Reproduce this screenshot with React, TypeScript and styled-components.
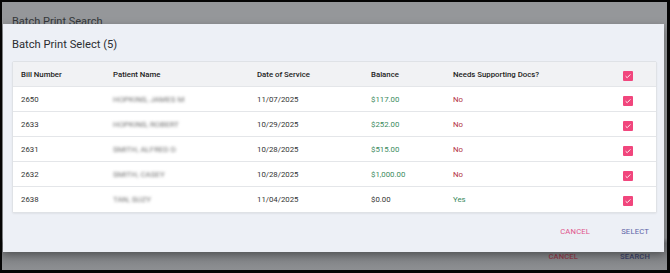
import React from "react";
import styled, { createGlobalStyle } from "styled-components";

const Global = createGlobalStyle`
  html, body { margin: 0; padding: 0; background: #000; }
  body { font-family: Roboto, "Liberation Sans", sans-serif; }
  * { box-sizing: border-box; }
`;

const Frame = styled.div`
  width: 670px;
  height: 273px;
  background: #050505;
  padding: 2px 3px 3px 2px;
`;

const Screen = styled.div`
  position: relative;
  width: 100%;
  height: 100%;
  background: linear-gradient(#95979a 0%, #95979a 88%, #76787b 90%, #8d8f92 100%);
  overflow: hidden;
  display: flex;
  flex-direction: column;
  justify-content: space-between;
`;

const BehindTitle = styled.div`
  padding: 13px 0 0 10px;
  font-size: 11px;
  color: #34373b;
  line-height: 14px;
`;

const BehindActions = styled.div`
  display: flex;
  justify-content: flex-end;
  gap: 42px;
  padding: 0 17px 9px 0;
`;

const BehindButton = styled.span<{ $tone: "cancel" | "ok" }>`
  font-size: 7.6px;
  font-weight: 500;
  letter-spacing: 0.02em;
  color: ${(p) => (p.$tone === "cancel" ? "#8e3b4a" : "#3a3f66")};
`;

const Dialog = styled.div`
  position: absolute;
  left: 1px;
  right: 3px;
  top: 22px;
  height: 228px;
  background: #edf0f6;
  box-shadow: 0 3px 8px rgba(0, 0, 0, 0.35);
  display: flex;
  flex-direction: column;
  padding: 13px 7px 0 9px;
`;

const Title = styled.h2`
  margin: 0 0 8px 0;
  font-size: 11.2px;
  font-weight: 400;
  line-height: 16px;
  color: #2b2d31;
`;

const Card = styled.div`
  background: #fff;
  border: 1px solid #dfe2e6;
  border-radius: 2px;
  box-shadow: 0 1px 2px rgba(0, 0, 0, 0.06);
`;

const Row = styled.div<{ $head?: boolean }>`
  display: grid;
  grid-template-columns: 92px 144px 114px 82px 171px 1fr;
  height: 25px;
  align-items: center;
  background: ${(p) => (p.$head ? "#f1f2f4" : "#fff")};
  border-bottom: 1px solid #e4e6e9;
  &:last-child { border-bottom: none; }
`;

const Cell = styled.div<{ $head?: boolean; $color?: string }>`
  padding-left: 8px;
  font-size: 7.8px;
  font-weight: ${(p) => (p.$head ? 500 : 400)};
  color: ${(p) => p.$color || (p.$head ? "#222" : "#333")};
  white-space: nowrap;
`;

const Blurred = styled.span`
  filter: blur(1.4px);
  color: #6e6e6e;
  font-size: 7.9px;
`;

const Check = styled.span`
  display: inline-flex;
  align-items: center;
  justify-content: center;
  width: 10px;
  height: 10px;
  margin-left: 7px;
  background: #f1467d;
  border-radius: 1px;
`;

const Actions = styled.div`
  display: flex;
  justify-content: flex-end;
  gap: 31px;
  padding: 14px 8px 0 0;
`;

const TextButton = styled.span<{ $tone: "cancel" | "ok" }>`
  font-size: 7.7px;
  font-weight: 400;
  letter-spacing: 0.02em;
  color: ${(p) => (p.$tone === "cancel" ? "#e0528b" : "#5b62a6")};
`;

const CheckBox = () => (
  <Check>
    <svg width="8" height="8" viewBox="0 0 8 8">
      <path d="M1.6 4.2 L3.2 5.7 L6.4 2.4" stroke="#fff" strokeWidth="0.9" fill="none" />
    </svg>
  </Check>
);

const rows = [
  { bill: "2650", name: "HOPKINS, JAMES M", date: "11/07/2025", bal: "$117.00", balColor: "#3a8a5c", docs: "No" },
  { bill: "2633", name: "HOPKINS, ROBERT", date: "10/29/2025", bal: "$252.00", balColor: "#3a8a5c", docs: "No" },
  { bill: "2631", name: "SMITH, ALFRED D", date: "10/28/2025", bal: "$515.00", balColor: "#3a8a5c", docs: "No" },
  { bill: "2632", name: "SMITH, CASEY", date: "10/28/2025", bal: "$1,000.00", balColor: "#3a8a5c", docs: "No" },
  { bill: "2638", name: "TAN, SUZY", date: "11/04/2025", bal: "$0.00", balColor: "#333", docs: "Yes" },
];

export default function App() {
  return (
    <Frame>
      <Global />
      <Screen>
        <BehindTitle>Batch Print Search</BehindTitle>
        <BehindActions>
          <BehindButton $tone="cancel">CANCEL</BehindButton>
          <BehindButton $tone="ok">SEARCH</BehindButton>
        </BehindActions>
        <Dialog>
          <Title>Batch Print Select (5)</Title>
          <Card>
            <Row $head>
              <Cell $head>Bill Number</Cell>
              <Cell $head>Patient Name</Cell>
              <Cell $head>Date of Service</Cell>
              <Cell $head>Balance</Cell>
              <Cell $head>Needs Supporting Docs?</Cell>
              <div><CheckBox /></div>
            </Row>
            {rows.map((r) => (
              <Row key={r.bill}>
                <Cell>{r.bill}</Cell>
                <Cell><Blurred>{r.name}</Blurred></Cell>
                <Cell>{r.date}</Cell>
                <Cell $color={r.balColor}>{r.bal}</Cell>
                <Cell $color={r.docs === "No" ? "#b3303f" : "#3a8a5c"}>{r.docs}</Cell>
                <div><CheckBox /></div>
              </Row>
            ))}
          </Card>
          <Actions>
            <TextButton $tone="cancel">CANCEL</TextButton>
            <TextButton $tone="ok">SELECT</TextButton>
          </Actions>
        </Dialog>
      </Screen>
    </Frame>
  );
}
